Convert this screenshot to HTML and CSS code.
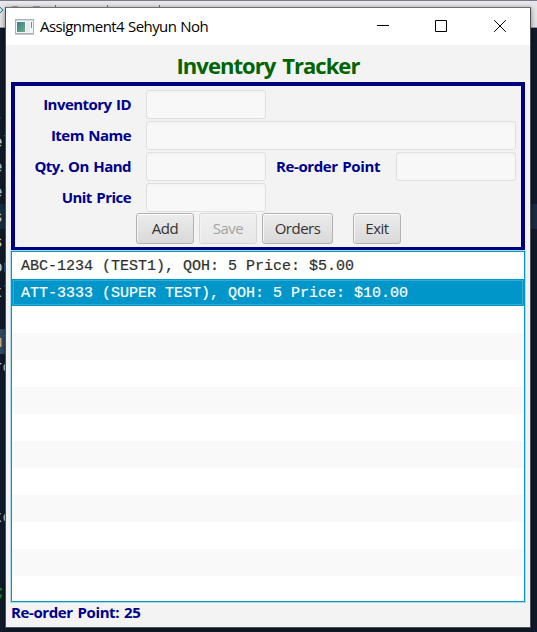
FILE: index.html
```html
<!DOCTYPE html>
<html lang="en">
<head>
<meta charset="utf-8">
<title>Inventory Tracker</title>
<link rel="stylesheet" href="styles.css">
</head>
<body>
<div class="desktop">
  <div class="toolbar"><svg width="537" height="28" viewBox="0 0 537 28"><path d="M0 0.5H537" stroke="#7d7b89"/><path d="M-3 10L0 7L3 10L0 13Z" fill="#b6e3ec" stroke="#3d7987"/><path d="M12 7H18" stroke="#775747"/><path d="M33 7H40" stroke="#526563"/><path d="M55.5 5V8M107.5 5V8M159.5 5V8" stroke="#77757c"/><path d="M0 27.5H537" stroke="#8797a9"/></svg></div>
  <div class="editor">
    <div class="code">-</div><div class="code w">el</div><div class="code b">e</div><div class="code b">e</div>
    <div class="code g current">s</div><div class="code g">s</div><div class="code w">or</div><div class="code">tl</div>
    <div class="code"></div><div class="code o marked">ul</div><div class="code w">ro</div>
    <div class="code"></div><div class="code"></div><div class="code"></div><div class="code"></div><div class="code"></div>
    <div class="code w">to</div><div class="code"></div><div class="code"></div><div class="code green">;a</div>
  </div>
</div>
<main class="window">
  <header class="titlebar">
    <svg class="appicon" width="19" height="16" viewBox="0 0 19 16"><rect x=".5" y=".5" width="18" height="14" fill="#f4f6f7" stroke="#a8b3c0"/><path d="M1 1.5H18" stroke="#d0d8e2"/><defs><linearGradient id="a" x2="1" y2="1"><stop stop-color="#397b91"/><stop offset="1" stop-color="#70ae82"/></linearGradient></defs><rect x="2" y="3" width="8" height="10" fill="url(#a)"/><rect x="11" y="3" width="4" height="10" fill="#e9ecec"/><path d="M16.5 3V9" stroke="#55a17f"/><path d="M0 15.5H19" stroke="#c8c8c8"/></svg>
    <span class="caption">Assignment4 Sehyun Noh</span>
    <svg class="controls" width="130" height="14" viewBox="0 0 130 14" fill="none" stroke="#000"><path d="M0 6.5H12M58.5 1.5H69.5V12.5H58.5ZM117.2 1.2L128.8 12.8M128.8 1.2L117.2 12.8"/></svg>
  </header>
  <div class="content">
    <h1>Inventory Tracker</h1>
    <section class="panel">
      <div class="form">
        <label for="id">Inventory ID</label><input id="id" disabled>
        <label for="name">Item Name</label><input id="name" class="wide" disabled>
        <label for="qty">Qty. On Hand</label><input id="qty" disabled>
        <label for="point">Re-order Point</label><input id="point" disabled>
        <label for="price">Unit Price</label><input id="price" disabled>
      </div>
      <div class="buttons"><button class="add">Add</button><button class="save" disabled>Save</button><button class="orders">Orders</button><button class="exit">Exit</button></div>
    </section>
    <div class="list">
      <div class="row">ABC-1234 (TEST1), QOH: 5 Price: $5.00</div>
      <div class="row selected">ATT-3333 (SUPER TEST), QOH: 5 Price: $10.00</div>
      <div class="row"></div><div class="row"></div><div class="row"></div><div class="row"></div><div class="row"></div><div class="row"></div><div class="row"></div><div class="row"></div><div class="row"></div><div class="row"></div>
    </div>
    <footer>Re-order Point: 25</footer>
  </div>
</main>
</body>
</html>
```
FILE: styles.css
```css
* { box-sizing: border-box; }
body { margin: 0; width: 537px; height: 632px; overflow: hidden; position: relative; font-family: "Open Sans", "Noto Sans", sans-serif; font-size: 15px; }
.desktop { height: 632px; background: #101a2a; }
.toolbar { height: 28px; background: linear-gradient(#e9e8eb, #dfdee2); }
.toolbar svg { display: block; }
.editor { padding-top: 76px; }
.code { height: 25px; font: 16px/29px "Liberation Mono", monospace; color: #c9d1d9; text-indent: -7px; white-space: nowrap; }
.code.b { color: #a9c4d2; }
.code.g { color: #c8dcb0; }
.code.o { color: #d7a583; }
.code.green { color: #188c22; text-indent: -4px; }
.current { background: #162d45; }
.marked { background: linear-gradient(90deg, #304a60 10px, transparent 10px); }
.window { position: absolute; left: 5px; top: 7px; width: 526px; height: 621px; border: 1px solid #4d5054; border-top-color: #707070; background: #f3f3f3; box-shadow: 0 1px 5px rgba(0,0,0,.45); }
.titlebar { height: 37px; background: #fff; display: flex; align-items: center; padding-left: 9px; }
.appicon { flex: none; }
.caption { margin: -2px 0 0 6px; width: 170px; white-space: nowrap; color: #000; letter-spacing: -.57px; word-spacing: .6px; }
.controls { margin-left: 167px; margin-bottom: 2px; }
.content { padding: 0 5px; }
h1 { margin: 0; height: 37px; font: 700 22px/41px "Open Sans", sans-serif; color: #006400; text-align: center; letter-spacing: -.95px; word-spacing: 2px; }
.panel { height: 169px; border: 4px solid #000080; padding: 4px 5px 0; }
.form { display: grid; grid-template-columns: 111px 15px 120px 10px 105px 15px 120px; grid-auto-rows: 29px; row-gap: 2px; width: 496px; }
.form label { grid-column: 1; text-align: right; color: #00008b; font-weight: 700; line-height: 29px; white-space: nowrap; letter-spacing: -.55px; word-spacing: 1.2px; }
.form input { grid-column: 3; width: 120px; height: 29px; border: 1px solid #dfdfdf; border-radius: 3px; padding: 0; background: linear-gradient(#f3f3f3, #f8f8f8 4px); }
.form .wide { grid-column: 3 / 8; width: 370px; }
.form label[for="point"] { grid-column: 5; text-align: left; letter-spacing: -.4px; }
.form #point { grid-column: 7; }
.buttons { display: flex; gap: 5px; padding-left: 116px; margin-top: 1px; }
button { height: 31px; border: 1px solid #b2b2b2; border-radius: 3px; padding: 0; background: linear-gradient(#ececec, #d9d9d9); box-shadow: inset 0 1px #fff, inset 1px 0 #f5f5f5; color: #333; font: 15px/29px "Open Sans", sans-serif; letter-spacing: -.5px; white-space: nowrap; }
.add, .save { width: 58px; }
.orders { width: 71px; }
.exit { width: 48px; margin-left: 15px; }
.save { opacity: .42; }
.list { height: 351px; border: 1px solid #0798c9; box-shadow: 0 0 0 1px #a9d9e9; background: #fff; overflow: hidden; width: 514px; position: relative; }
.row { height: 27px; padding-left: 9px; font: 15px/30px "Liberation Mono", monospace; color: #303030; white-space: pre; -webkit-text-stroke: .2px currentColor; }
.row:nth-child(even) { background: #f9f9f9; }
.row.selected { background: #0096c9; color: #fff; box-shadow: inset 0 0 0 1px #0096c9, inset 0 0 0 2px #30acd5; }
footer { height: 23px; line-height: 21px; font-weight: 700; color: #00008b; letter-spacing: -.4px; word-spacing: 1.4px; white-space: nowrap; }
```
